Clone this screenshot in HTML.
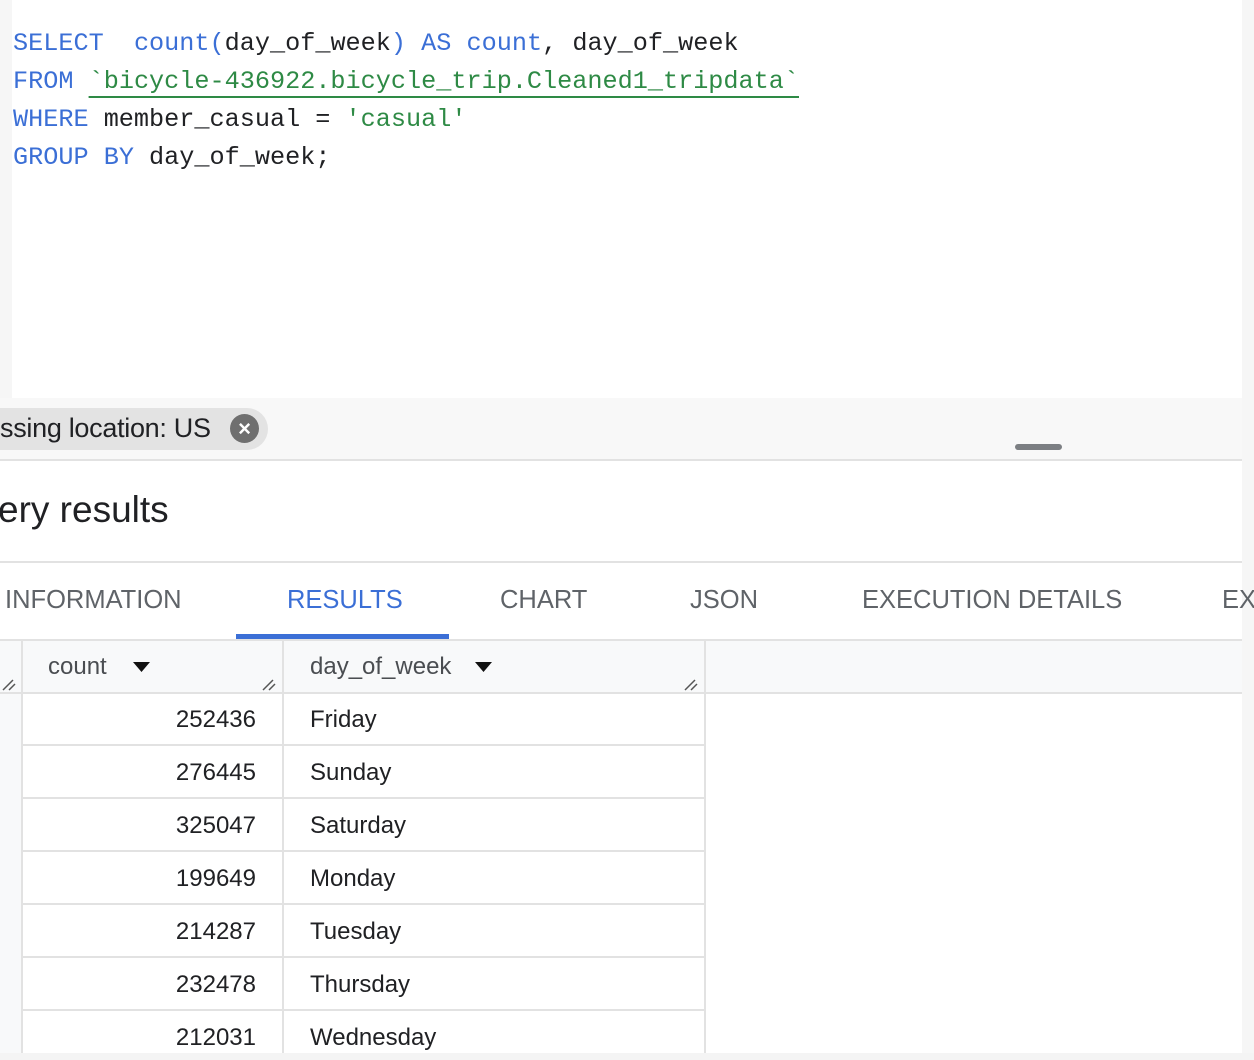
<!DOCTYPE html>
<html><head><style>
*{margin:0;padding:0;box-sizing:border-box}
body{width:1254px;height:1060px;position:relative;overflow:hidden;background:#fff;font-family:"Liberation Sans",sans-serif}
.a{position:absolute}
.code{font-family:"Liberation Mono",monospace;font-size:25.2px;white-space:pre;color:#202124}
.k{color:#3b6fd6}.s{color:#2e8a45}
.t{font-size:24px;color:#202124;white-space:nowrap}
.tab{font-size:25.5px;color:#5f6368;top:586px;white-space:nowrap}
.hl{height:2px;background:#e2e2e2}
.num{right:0;width:234px;text-align:right}
</style></head><body>
<div class="a" style="left:0;top:0;width:12px;height:398px;background:#f6f6f6"></div>
<div class="a" style="left:1242px;top:0;width:12px;height:1060px;background:#f6f6f6"></div>
<div class="a code" style="left:13px;top:25px;line-height:38px"><span class="k">SELECT</span>  <span class="k">count(</span>day_of_week<span class="k">)</span> <span class="k">AS</span> <span class="k">count</span>, day_of_week
<span class="k">FROM</span> <span class="s" style="text-decoration:underline;text-underline-offset:8px">`bicycle-436922.bicycle_trip.Cleaned1_tripdata`</span>
<span class="k">WHERE</span> member_casual = <span class="s">'casual'</span>
<span class="k">GROUP</span> <span class="k">BY</span> day_of_week;</div>
<div class="a" style="left:0;top:398px;width:1242px;height:62px;background:#f8f8f8"></div>
<div class="a" style="left:-30px;top:408px;width:298px;height:42px;border-radius:21px;background:#e3e3e3"></div>
<div class="a t" style="left:0;top:413px;font-size:27px;letter-spacing:-0.3px">ssing location: US</div>
<div class="a" style="left:230px;top:414px;width:29px;height:29px;border-radius:50%;background:#6f6f6f;color:#fff;font-size:22px;font-weight:bold;text-align:center;line-height:29px">×</div>
<div class="a" style="left:1015px;top:444px;width:47px;height:6px;border-radius:3px;background:#7c7f83"></div>
<div class="a hl" style="left:0;top:459px;width:1242px"></div>
<div class="a t" style="left:-2px;top:489px;font-size:37px">ery results</div>
<div class="a hl" style="left:0;top:561px;width:1242px"></div>
<div class="a tab" style="left:5px">INFORMATION</div>
<div class="a tab" style="left:287px;color:#3b6fd6">RESULTS</div>
<div class="a tab" style="left:500px">CHART</div>
<div class="a tab" style="left:690px">JSON</div>
<div class="a tab" style="left:862px">EXECUTION DETAILS</div>
<div class="a tab" style="left:1222px">EX</div>
<div class="a" style="left:236px;top:634px;width:213px;height:5px;background:#3b6fd6"></div>
<div class="a hl" style="left:0;top:639px;width:1242px"></div>
<div class="a" style="left:0;top:641px;width:1242px;height:52px;background:#f8f9fa"></div>
<div class="a" style="left:0;top:693px;width:22px;height:360px;background:#f8f9fa"></div>
<div class="a" style="left:21px;top:641px;width:2px;height:412px;background:#e2e2e2"></div>
<div class="a" style="left:282px;top:641px;width:2px;height:412px;background:#e2e2e2"></div>
<div class="a" style="left:704px;top:641px;width:2px;height:412px;background:#e2e2e2"></div>
<div class="a hl" style="left:0;top:692px;width:1242px"></div>
<div class="a t" style="left:48px;top:653px;color:#4a4d51">count</div>
<div class="a t" style="left:310px;top:653px;color:#4a4d51">day_of_week</div>
<svg class="a" style="left:0;top:660px" width="706" height="32"><path d="M133 2H150L141.5 12Z" fill="#111"/><path d="M475 2H492L483.5 12Z" fill="#111"/><g stroke="#555" stroke-width="1.5"><path d="M3 30L13 20M9 30L15 24"/><path d="M263 30L273 20M269 30L275 24"/><path d="M685 30L695 20M691 30L697 24"/></g></svg>
<div class="a" style="left:23px;top:693px;width:681px">
<div style="position:relative;height:53px;border-bottom:2px solid #e2e2e2"><span class="a t num" style="left:0;width:233px;top:13px">252436</span><span class="a t" style="left:287px;top:13px">Friday</span></div>
<div style="position:relative;height:53px;border-bottom:2px solid #e2e2e2"><span class="a t num" style="left:0;width:233px;top:13px">276445</span><span class="a t" style="left:287px;top:13px">Sunday</span></div>
<div style="position:relative;height:53px;border-bottom:2px solid #e2e2e2"><span class="a t num" style="left:0;width:233px;top:13px">325047</span><span class="a t" style="left:287px;top:13px">Saturday</span></div>
<div style="position:relative;height:53px;border-bottom:2px solid #e2e2e2"><span class="a t num" style="left:0;width:233px;top:13px">199649</span><span class="a t" style="left:287px;top:13px">Monday</span></div>
<div style="position:relative;height:53px;border-bottom:2px solid #e2e2e2"><span class="a t num" style="left:0;width:233px;top:13px">214287</span><span class="a t" style="left:287px;top:13px">Tuesday</span></div>
<div style="position:relative;height:53px;border-bottom:2px solid #e2e2e2"><span class="a t num" style="left:0;width:233px;top:13px">232478</span><span class="a t" style="left:287px;top:13px">Thursday</span></div>
<div style="position:relative;height:42px"><span class="a t num" style="left:0;width:233px;top:13px">212031</span><span class="a t" style="left:287px;top:13px">Wednesday</span></div>
</div>
<div class="a" style="left:0;top:1053px;width:1254px;height:7px;background:#f4f4f4"></div>
</body></html>
